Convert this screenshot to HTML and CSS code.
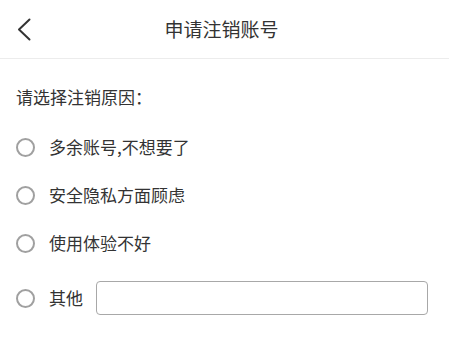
FILE: index.html
```html
<!DOCTYPE html>
<html lang="zh-CN">
<head>
<meta charset="utf-8">
<title>申请注销账号</title>
<link rel="stylesheet" href="styles.css">
</head>
<body>
<div class="page">
  <header class="header">
    <div class="back">
      <svg width="14" height="24" viewBox="0 0 14 24" aria-hidden="true">
        <path d="M12.5 1.5 L2 11.5 L12.5 21.5" fill="none" stroke="#333" stroke-width="2" stroke-linecap="round" stroke-linejoin="round"/>
      </svg>
    </div>
    <h1 class="title">申请注销账号</h1>
    <div class="spacer"></div>
  </header>
  <main class="content">
    <p class="prompt">请选择注销原因：</p>
    <ul class="options">
      <li class="option"><span class="radio"></span><span class="label">多余账号,不想要了</span></li>
      <li class="option"><span class="radio"></span><span class="label">安全隐私方面顾虑</span></li>
      <li class="option"><span class="radio"></span><span class="label">使用体验不好</span></li>
      <li class="option option-other"><span class="radio"></span><span class="label">其他</span><input class="other-input" type="text"></li>
    </ul>
  </main>
</div>
</body>
</html>
```

FILE: styles.css
```css
* { box-sizing: border-box; }
html, body {
  margin: 0;
  padding: 0;
  background: #fff;
}
body {
  font-family: "Noto Sans CJK SC", "Noto Sans", sans-serif;
  color: #333;
}
.page {
  width: 449px;
}
.header {
  display: grid;
  grid-template-columns: 48px 1fr 54px;
  align-items: center;
  height: 59px;
  border-bottom: 1px solid #ececec;
}
.back {
  display: flex;
  align-items: center;
  padding-left: 17px;
  padding-top: 1px;
}
.back svg { display: block; }
.title {
  margin: 0;
  text-align: center;
  font-size: 19px;
  font-weight: normal;
  line-height: 24px;
  color: #333;
}
.content {
  padding: 0 21px 0 16px;
}
.prompt {
  margin: 0;
  padding-top: 26px;
  height: 64px;
  font-size: 17px;
  line-height: 24px;
  color: #333;
}
.options {
  list-style: none;
  margin: 0;
  padding: 0;
}
.option {
  display: flex;
  align-items: center;
  height: 48px;
  font-size: 17px;
  line-height: 22px;
}
.option-other {
  height: 62px;
}
.radio {
  flex: none;
  width: 19px;
  height: 19px;
  border: 2px solid #a0a0a0;
  border-radius: 50%;
  margin-right: 14px;
}
.label {
  color: #333;
}
.other-input {
  flex: 1;
  height: 34px;
  margin-left: 13px;
  border: 1px solid #a8a8a8;
  border-radius: 4px;
  background: #fff;
  font: inherit;
  padding: 0 8px;
}
```
